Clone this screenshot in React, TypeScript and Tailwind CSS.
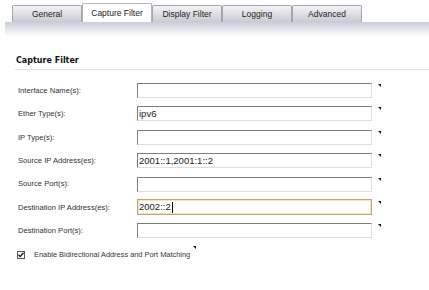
import React from 'react';

const tabs = ['General', 'Capture Filter', 'Display Filter', 'Logging', 'Advanced'];

const fields = [
    { label: 'Interface Name(s):', value: '' },
    { label: 'Ether Type(s):', value: 'ipv6' },
    { label: 'IP Type(s):', value: '' },
    { label: 'Source IP Address(es):', value: '2001::1,2001:1::2' },
    { label: 'Source Port(s):', value: '' },
    { label: 'Destination IP Address(es):', value: '2002::2', focused: true },
    { label: 'Destination Port(s):', value: '' },
];

function Marker() {
    return (
        <svg width="3" height="3" viewBox="0 0 3 3" className="shrink-0">
            <polygon points="0,0 3,0 3,3" fill="#111" />
        </svg>
    );
}

export default function App() {
    return (
        <div className="w-[429px] h-[290px] bg-white overflow-hidden font-['Liberation_Sans',Arial,sans-serif]">
            {/* tabs */}
            <div className="flex items-end pl-[12px] pt-[3px] h-[22px]">
                {tabs.map((t) =>
                    t === 'Capture Filter' ? (
                        <div
                            key={t}
                            className="w-[70px] h-[19px] flex items-center justify-center bg-white border border-b-0 border-[#b4b4b4] rounded-t-[2px] text-[8.5px] text-[#222]"
                        >
                            {t}
                        </div>
                    ) : (
                        <div
                            key={t}
                            className="w-[70px] h-[17px] flex items-center justify-center bg-gradient-to-b from-[#f4f4f6] to-[#c9cad2] border border-b-0 border-[#a4a5ae] rounded-t-[2px] text-[8.5px] text-[#222]"
                        >
                            {t}
                        </div>
                    )
                )}
            </div>
            <div className="ml-[5px] h-[14px] bg-gradient-to-b from-[#c9cdd9] to-white" />

            {/* section */}
            <div className="pl-[15px] mt-[19px]">
                <div className="pl-[1px] pb-[2px] border-b border-[#e2e2e2] font-['DejaVu_Sans',Verdana,sans-serif] font-bold text-[8px] leading-[12px] text-[#111]">
                    Capture Filter
                </div>
            </div>

            <div className="flex flex-col gap-[8.4px] pl-[18px] mt-[13px]">
                {fields.map((f) => (
                    <div key={f.label} className="flex items-center h-[15px]">
                        <div className="w-[119px] text-[7.6px] text-[#333]">{f.label}</div>
                        <div
                            className={
                                f.focused
                                    ? 'w-[235px] h-[16px] flex items-center pl-[1px] border border-[#b9a775] bg-[#fffefa] shadow-[inset_0_0_0_1px_#efe6c8] text-[9.5px] text-[#222]'
                                    : 'w-[235px] h-[15px] flex items-center pl-[1px] border border-t-[#7c7c7c] border-l-[#7c7c7c] border-r-[#dedede] border-b-[#dedede] bg-white text-[9.5px] text-[#222]'
                            }
                        >
                            {f.value}
                            {f.focused && <span className="w-px h-[11px] bg-black ml-[1px]" />}
                        </div>
                        <div className="ml-[6px] self-start mt-[1px]">
                            <Marker />
                        </div>
                    </div>
                ))}
            </div>

            <div className="flex items-center pl-[17px] mt-[11px]">
                <div className="w-[8px] h-[8px] border border-[#555] bg-white flex items-center justify-center">
                    <svg width="6" height="6" viewBox="0 0 6 6">
                        <path d="M0.5 2.8 L2.2 4.6 L5.5 0.8" stroke="#111" strokeWidth="1.3" fill="none" />
                    </svg>
                </div>
                <span className="ml-[9px] text-[7.4px] text-[#333]">Enable Bidirectional Address and Port Matching</span>
                <div className="ml-[3px] self-start mt-[-3px]">
                    <Marker />
                </div>
            </div>
        </div>
    );
}
